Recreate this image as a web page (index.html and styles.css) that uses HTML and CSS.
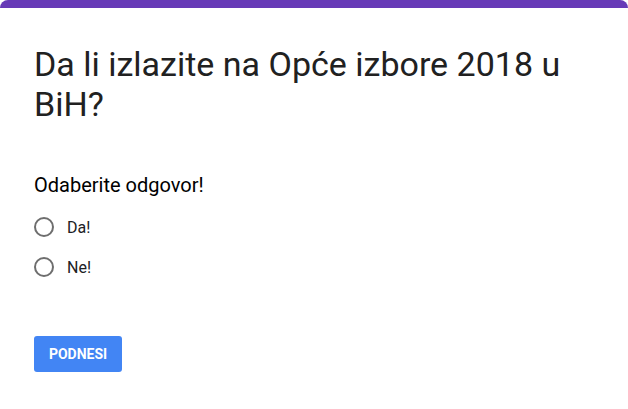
FILE: index.html
```html
<!DOCTYPE html>
<html lang="bs">
<head>
<meta charset="utf-8">
<link rel="stylesheet" href="styles.css">
</head>
<body>
<div class="card">
  <div class="accent"></div>
  <div class="content">
    <h1 class="title">Da li izlazite na Opće izbore 2018 u BiH?</h1>
    <div class="question">Odaberite odgovor!</div>
    <div class="options">
      <label class="option"><span class="radio"></span><span class="label">Da!</span></label>
      <label class="option"><span class="radio"></span><span class="label">Ne!</span></label>
    </div>
    <button class="submit">PODNESI</button>
  </div>
</div>
</body>
</html>
```
FILE: styles.css
```css
html, body {
  margin: 0;
  padding: 0;
  background: #fff;
}
body {
  font-family: Roboto, "Liberation Sans", sans-serif;
}
.card {
  width: 628px;
}
.accent {
  height: 8px;
  background: #673ab7;
  border-radius: 8px 8px 0 0;
}
.content {
  padding: 36px 34px 0 34px;
}
.title {
  margin: 0;
  font-size: 34px;
  line-height: 40px;
  font-weight: 400;
  color: #212121;
  width: 560px;
}
.question {
  margin-top: 49px;
  font-size: 20px;
  line-height: 24px;
  color: #000;
}
.options {
  margin-top: 10px;
  display: flex;
  flex-direction: column;
}
.option {
  display: flex;
  align-items: center;
  height: 40px;
}
.radio {
  box-sizing: border-box;
  width: 20px;
  height: 20px;
  border: 2px solid #6e6e6e;
  border-radius: 50%;
  flex: none;
}
.label {
  margin-left: 13px;
  font-size: 16px;
  color: #202124;
}
.submit {
  margin-top: 49px;
  width: 88px;
  height: 36px;
  border: none;
  border-radius: 3px;
  background: #4285f4;
  color: #fff;
  font-family: Roboto, "Liberation Sans", sans-serif;
  font-size: 14px;
  font-weight: 700;
  padding: 0;
  display: block;
}
```
